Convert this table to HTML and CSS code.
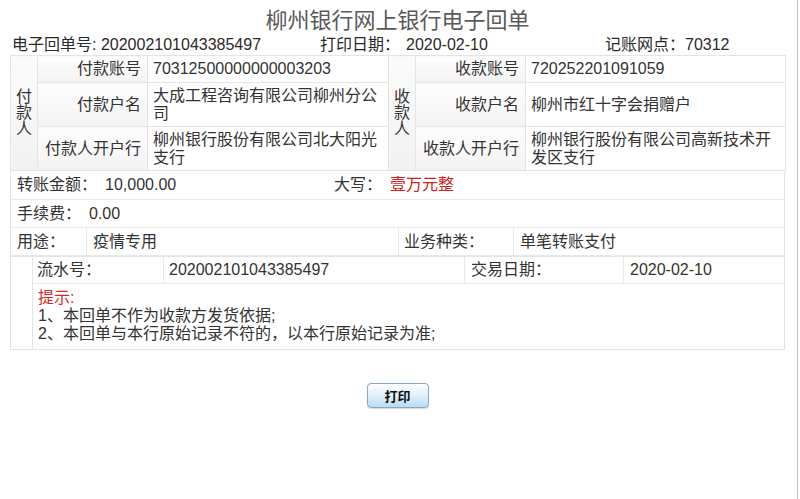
FILE: index.html
```html
<!DOCTYPE html>
<html>

<head>
	<meta charset="utf-8" />
	<title>柳州银行网上银行电子回单</title>
	<link rel="stylesheet" href="styles.css">
</head>

<body>

	<div class="receipt">
		<h1 class="receipt-title">柳州银行网上银行电子回单</h1>

		<div class="receipt-meta">
			<span class="meta-no">电子回单号: 202002101043385497</span>
			<span class="meta-date">打印日期：<span class="meta-value">2020-02-10</span></span>
			<span class="meta-branch">记账网点：70312</span>
		</div>

		<!-- Payer / payee block -->
		<table class="parties">
			<colgroup>
				<col class="col-side">
				<col class="col-label">
				<col class="col-payer">
				<col class="col-side">
				<col class="col-label">
				<col class="col-payee">
			</colgroup>
			<tr class="row-short">
				<td class="side" rowspan="3">付<br>款<br>人</td>
				<td class="label">付款账号</td>
				<td class="value">70312500000000003203</td>
				<td class="side" rowspan="3">收<br>款<br>人</td>
				<td class="label">收款账号</td>
				<td class="value">720252201091059</td>
			</tr>
			<tr class="row-tall">
				<td class="label">付款户名</td>
				<td class="value">大成工程咨询有限公司柳州分公司</td>
				<td class="label">收款户名</td>
				<td class="value">柳州市红十字会捐赠户</td>
			</tr>
			<tr class="row-tall">
				<td class="label">付款人开户行</td>
				<td class="value">柳州银行股份有限公司北大阳光支行</td>
				<td class="label">收款人开户行</td>
				<td class="value">柳州银行股份有限公司高新技术开发区支行</td>
			</tr>
		</table>

		<!-- Amount, fee and purpose -->
		<div class="summary">
			<div class="summary-row">
				<span class="amount-label">转账金额：</span>
				<span class="amount-value">10,000.00</span>
				<span class="caps-label">大写：</span>
				<span class="caps-value">壹万元整</span>
			</div>
			<div class="summary-row">
				<span class="fee-label">手续费：</span>
				<span>0.00</span>
			</div>
			<div class="summary-row summary-cells">
				<span class="cell use-label">用途：</span>
				<span class="cell use-value">疫情专用</span>
				<span class="cell kind-label">业务种类：</span>
				<span class="cell kind-value">单笔转账支付</span>
			</div>
		</div>

		<!-- Serial number and notes -->
		<div class="detail">
			<div class="detail-gap"></div>
			<div class="detail-body">
				<div class="detail-row">
					<span class="cell serial-label">流水号：</span>
					<span class="cell serial-value">202002101043385497</span>
					<span class="cell date-label">交易日期：</span>
					<span class="cell date-value">2020-02-10</span>
				</div>
				<div class="notes">
					<span class="notes-title">提示:</span><br>
					1、本回单不作为收款方发货依据;<br>
					2、本回单与本行原始记录不符的，以本行原始记录为准;
				</div>
			</div>
		</div>

		<div class="actions">
			<button type="button" class="print-button">打印</button>
		</div>
	</div>

</body>

</html>
```

FILE: styles.css
```css
* {
	-webkit-box-sizing: border-box;
	box-sizing: border-box;
}

html {
	background-color: #fff;
}

body {
	margin: 0;
	min-height: 499px;
	font-family: "Liberation Sans", "Noto Sans CJK SC", sans-serif;
	font-size: 16px;
	line-height: 18px;
	color: #333;
	position: relative;
}

/* window edge on the right */
body::after {
	content: "";
	position: absolute;
	top: 0;
	bottom: 0;
	right: 2px;
	width: 1px;
	background-color: #c4c4c4;
}

.receipt {
	width: 785px;
	padding-left: 10px;
}

.receipt-title {
	margin: 8px 0 0;
	font-size: 22px;
	font-weight: normal;
	line-height: 26px;
	text-align: center;
	color: #5a5a5a;
}

.receipt-meta {
	display: flex;
	margin: 2px 0 1px;
	padding-left: 2px;
	color: #2a2a2a;
}

.meta-no {
	width: 308px;
}

.meta-date {
	width: 285px;
}

.meta-value {
	margin-left: 6px;
}

/* payer / payee table */
.parties {
	width: 775px;
	table-layout: fixed;
	border-collapse: collapse;
}

.parties td {
	border: 1px solid #e4e4e4;
	padding: 0 5px;
	vertical-align: middle;
}

.col-side {
	width: 27px;
}

.col-label {
	width: 110px;
}

.col-payer {
	width: 241px;
}

.col-payee {
	width: 260px;
}

.row-short {
	height: 27px;
}

.row-tall {
	height: 44px;
}

.parties .side {
	padding: 0;
	text-align: center;
	line-height: 16px;
	background: linear-gradient(to bottom, #fbfbfb, #f2f2f2);
}

.parties .label {
	padding-right: 6px;
	text-align: right;
	background: linear-gradient(to bottom, #fdfdfd, #f3f3f3);
}

.parties .value {
	background-color: #fff;
}

/* amount rows */
.summary {
	border: 1px solid #e4e4e4;
	border-top: 0;
}

.summary-row {
	display: flex;
	align-items: center;
	height: 28px;
	padding-left: 6px;
	border-bottom: 1px solid #e8e8e8;
}

.summary-row:first-child {
	height: 29px;
}

.amount-label {
	width: 88px;
}

.amount-value {
	width: 229px;
}

.caps-label {
	width: 56px;
}

.caps-value {
	color: #cc2020;
}

.fee-label {
	width: 72px;
}

.summary-cells {
	padding-left: 0;
	align-items: stretch;
}

.cell {
	display: flex;
	align-items: center;
	padding-left: 6px;
	border-right: 1px solid #e8e8e8;
}

.cell:last-child {
	border-right: 0;
}

.use-label {
	width: 76px;
}

.use-value {
	width: 312px;
}

.kind-label {
	width: 115px;
	padding-left: 5px;
}

.kind-value {
	flex: 1;
}

/* serial number and notes */
.detail {
	display: flex;
	border: 1px solid #e4e4e4;
	border-top: 0;
}

.detail-gap {
	width: 22px;
	border-right: 1px solid #e4e4e4;
}

.detail-body {
	flex: 1;
}

.detail-row {
	display: flex;
	height: 27px;
	border-bottom: 1px solid #e8e8e8;
}

.serial-label {
	width: 131px;
	padding-left: 4px;
}

.serial-value {
	width: 301px;
	padding-left: 5px;
}

.date-label {
	width: 159px;
	padding-left: 6px;
}

.date-value {
	flex: 1;
	padding-left: 6px;
}

.notes {
	height: 65px;
	padding: 5px 0 0 5px;
	line-height: 18px;
}

.notes-title {
	color: #d42a2a;
}

/* print button */
.actions {
	display: flex;
	justify-content: center;
	padding-top: 33px;
}

.print-button {
	width: 62px;
	height: 25px;
	margin: 0;
	padding: 0;
	font-family: "Liberation Sans", "Noto Sans CJK SC", sans-serif;
	font-size: 13px;
	font-weight: bold;
	color: #111;
	background: linear-gradient(to bottom, #fdfeff 0%, #e3f1fc 45%, #b9dbf4 100%);
	border: 1px solid #8aa6c0;
	-webkit-border-radius: 4px;
	border-radius: 4px;
	box-shadow: 0 1px 1px rgba(0, 0, 0, .15);
	cursor: pointer;
}
```
